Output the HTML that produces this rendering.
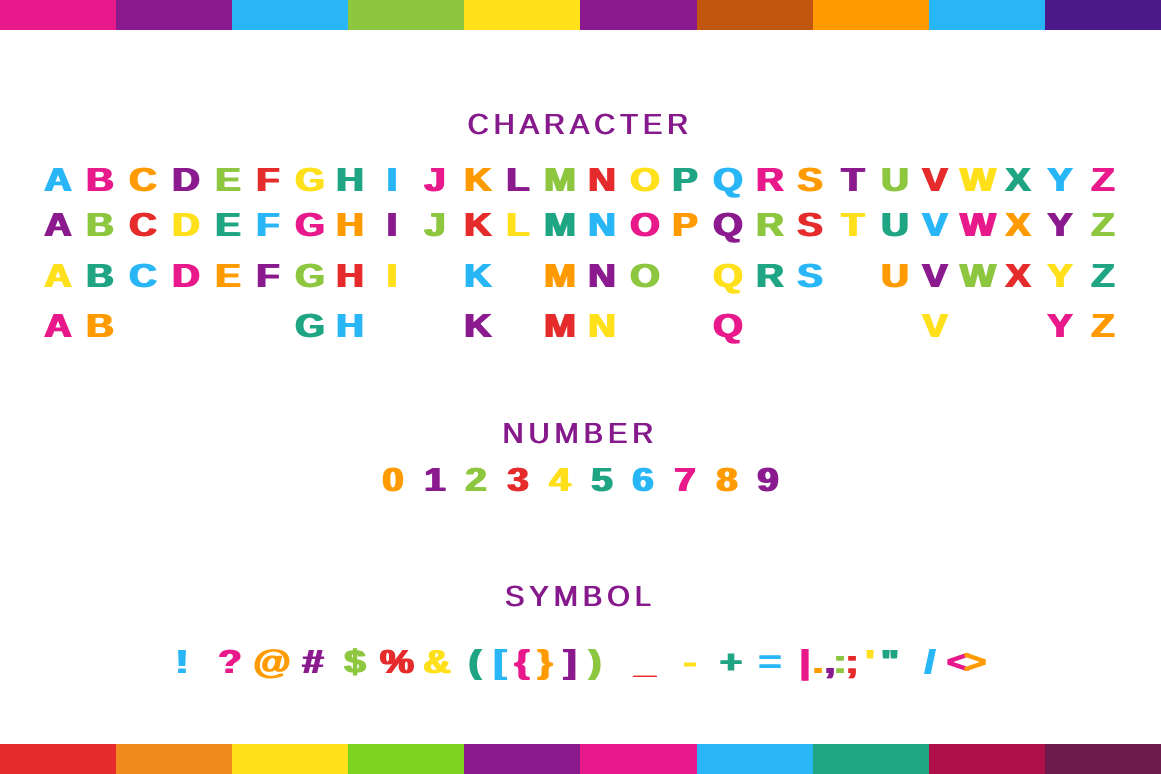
<!DOCTYPE html>
<html><head><meta charset="utf-8"><style>
html,body{margin:0;padding:0;background:#fff;width:1161px;height:774px;overflow:hidden;position:relative;font-family:"Liberation Sans",sans-serif}
.bar{position:absolute;left:0;width:1161px;height:30px;display:flex}
.bar div{flex:1}
.t{position:absolute;left:0;width:1161px;text-align:center;color:#861a8c;font-size:29px;letter-spacing:5px;font-weight:normal;text-shadow:0.6px 0 0 #861a8c,-0.6px 0 0 #861a8c}
.g{position:absolute;font-weight:900;font-size:33px;line-height:33px;transform:translateX(-50%) scaleX(1.15);text-shadow:1px 0 0 currentColor,-1px 0 0 currentColor}
</style></head><body>
<div class="bar" style="top:0"><div style="background:#e8198b"></div><div style="background:#8b1a8f"></div><div style="background:#29b6f6"></div><div style="background:#8dc63f"></div><div style="background:#ffe01b"></div><div style="background:#8b1a8f"></div><div style="background:#c1570f"></div><div style="background:#ff9b00"></div><div style="background:#29b6f6"></div><div style="background:#4d1a8b"></div></div>
<div class="bar" style="top:744px"><div style="background:#e52b2b"></div><div style="background:#f08a1c"></div><div style="background:#ffe01b"></div><div style="background:#7ed321"></div><div style="background:#8b1a8f"></div><div style="background:#e8198b"></div><div style="background:#29b6f6"></div><div style="background:#1fa584"></div><div style="background:#b0104a"></div><div style="background:#6b1a4a"></div></div>
<div class="t" style="top:109px">CHARACTER</div>
<div class="t" style="top:418px">NUMBER</div>
<div class="t" style="top:581px">SYMBOL</div>
<div id="c"></div>
<script>
var cols=["#29b6f6","#e8198b","#ff9b00","#8b1a8f","#8dc63f","#e52b2b","#ffe01b","#1fa584"];
var xs=[58,100,143,186,228,268,310,350,392,435,478,518,560,602,645,685,728,770,810,853,895,935,978,1018,1060,1103];
var L="ABCDEFGHIJKLMNOPQRSTUVWXYZ";
var h="";
function g(ch,x,y,i){h+='<span class="g" style="left:'+x+'px;top:'+y+'px;color:'+cols[i%8]+'">'+ch+'</span>';}
var rows=[[163,L],[208,L],[259,"ABCDEFGHI K MNO QRS UVWXYZ"],[309,"AB    GH  K MN  Q    V  YZ"]];
rows.forEach(function(r,ri){for(var i=0;i<26;i++){var c=r[1][i];if(c&&c!=" ")g(c,xs[i],r[0],i+ri*3);}});
for(var n=0;n<10;n++)g(""+n,393+n*41.7,463,n+2);
var s=[["!",182],["?",230],["@",272],["#",313],["$",355],["%",397],["&",437],["(",475],["[",500],["{",522],["}",545],["]",570],[")",595],["_",645],["-",690],["+",731],["=",770],["|",805],[".",818],[",",830],[":",840],[";",852],["'",870],['"',890],["/",930],["<",958],[">",975]];
s.forEach(function(e,i){g(e[0],e[1],645,i);});
document.getElementById("c").innerHTML=h;
</script>
</body></html>
